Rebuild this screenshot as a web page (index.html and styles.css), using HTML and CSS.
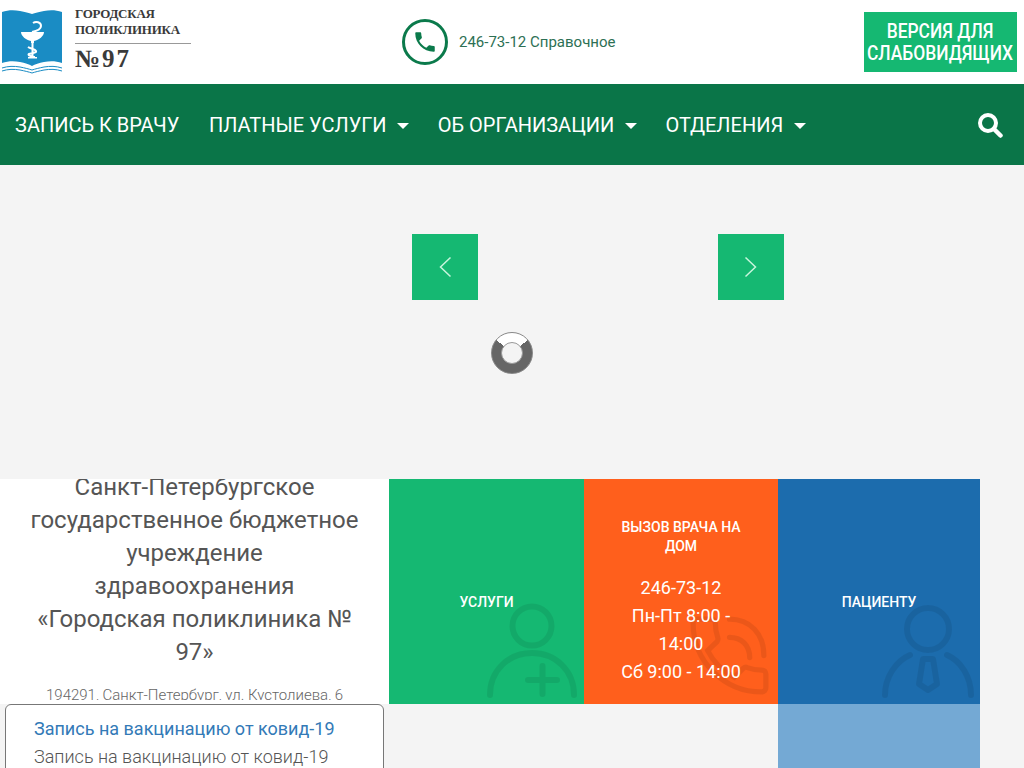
FILE: index.html
```html
<!DOCTYPE html>
<html lang="ru">
<head>
  <meta charset="UTF-8" />
  <meta name="viewport" content="width=device-width, initial-scale=1.0" />
  <title>Городская поликлиника № 97</title>
  <link rel="stylesheet" href="styles.css">
</head>
<body>
  <header class="top">
    <a class="logo" href="#">
      <svg class="logo-book" viewBox="0 3 62 72" width="62" height="72">
        <path fill="#1a8cc4" d="M1 9c6-2 12-2 18-1 5 1 9 2 12 3 3-1 7-2 12-3 6-1 12-1 18 1v51c-6-2-12-2-18-1-5 1-9 2-12 4-3-2-7-3-12-4-6-1-12-1-18 1z"/>
        <path fill="none" stroke="#1a8cc4" stroke-width="1" d="M1 65c6-2 12-2 18-1 5 1 9 2 12 3 3-1 7-2 12-3 6-1 12-1 18 1M1 68c6-2 12-2 18-1 5 1 9 2 12 3 3-1 7-2 12-3 6-1 12-1 18 1"/>
        <path fill="#fff" d="M20 29h23c0 4-5 8-10 9v2h-3v-2c-5-1-10-5-10-9z"/>
        <path fill="none" stroke="#fff" stroke-width="2" d="M31 29c5-1 9-3 9-6 0-4-5-5-8-3M31.500 40v14M27 44c3 2 7 2 8 4s-5 2-7 3 3 3 6 3"/>
        <path fill="#fff" d="M27 54h9v1.500h-9z"/>
      </svg>
      <div class="logo-text">
        <div class="logo-name">Городская<br>поликлиника</div>
        <div class="logo-num">№97</div>
      </div>
    </a>
    <div class="phone">
      <span class="phone-ring">
        <svg viewBox="0 0 24 24" width="26" height="26"><path fill="#0b7a4b" d="M6.600 10.800c1.400 2.800 3.800 5.100 6.600 6.600l2.200-2.200c.3-.3.7-.4 1-.2 1.100.4 2.300.6 3.600.6.600 0 1 .4 1 1V20c0 .6-.4 1-1 1C10.600 21 3 13.400 3 4c0-.6.4-1 1-1h3.500c.6 0 1 .4 1 1 0 1.300.2 2.500.6 3.600.1.300 0 .7-.2 1z"/></svg>
      </span>
      <span class="phone-text">246-73-12 Справочное</span>
    </div>
    <a class="blind-btn" href="#"><span>Версия для<br>слабовидящих</span></a>
  </header>

  <nav class="menu">
    <a href="#" class="first">Запись к врачу</a>
    <a href="#" class="has-sub">Платные услуги</a>
    <a href="#" class="has-sub">Об организации</a>
    <a href="#" class="has-sub">Отделения</a>
    <svg class="search" viewBox="0 0 26 26" width="26" height="26">
      <circle cx="11" cy="11" r="8" fill="none" stroke="#fff" stroke-width="4"/>
      <path d="M17 17l6.500 6.500" stroke="#fff" stroke-width="4.500" stroke-linecap="round"/>
    </svg>
  </nav>

  <section class="slider">
    <span class="arrow arrow-prev">
      <svg viewBox="0 0 14 22" width="14" height="22"><path d="M12.500 1.500L2.500 11l10 9.500" fill="none" stroke="#c8f5dd" stroke-width="1.500"/></svg>
    </span>
    <span class="arrow arrow-next">
      <svg viewBox="0 0 14 22" width="14" height="22"><path d="M1.500 1.500l10 9.500-10 9.500" fill="none" stroke="#c8f5dd" stroke-width="1.500"/></svg>
    </span>
    <span class="loader"></span>
  </section>

  <section class="blocks">
    <div class="about">
      <h1>Санкт-Петербургское государственное бюджетное учреждение здравоохранения «Городская поликлиника № 97»</h1>
      <p>194291, Санкт-Петербург, ул. Кустолиева, 6</p>
    </div>
    <a class="tile tile-green" href="#">
      <span class="tile-title">Услуги</span>
      <svg class="tile-ico ico-a" viewBox="0 0 95 97" width="95" height="97">
        <g fill="none" stroke="#000" stroke-opacity=".08" stroke-width="6" stroke-linecap="round">
          <circle cx="47" cy="23" r="19.500"/>
          <path d="M5 92c0-24 18-42 42-42s42 18 42 42"/>
          <path d="M43 77h29M57.500 63v28"/>
        </g>
      </svg>
    </a>
    <a class="tile tile-orange" href="#">
      <span class="tile-title">Вызов врача на дом</span>
      <span class="tile-info">246-73-12<br>Пн-Пт 8:00 - 14:00<br>Сб 9:00 - 14:00</span>
      <svg class="tile-ico ico-b" viewBox="0 0 24 24" width="97" height="97">
        <g fill="none" stroke="#000" stroke-opacity=".08" stroke-width="1.300" stroke-linecap="round">
          <path d="M6.600 10.800c1.400 2.800 3.800 5.100 6.600 6.600l2.200-2.200c.3-.3.7-.4 1-.2 1.100.4 2.300.6 3.600.6.600 0 1 .4 1 1V20c0 .6-.4 1-1 1C10.600 21 3 13.400 3 4c0-.6.4-1 1-1h3.500c.6 0 1 .4 1 1 0 1.300.2 2.500.6 3.600.1.300 0 .7-.2 1z"/>
          <path d="M12 7.500c3 0 5 2 5 5M12 3c5 0 8.500 3.500 8.500 9"/>
        </g>
      </svg>
    </a>
    <a class="tile tile-blue" href="#">
      <span class="tile-title">Пациенту</span>
      <svg class="tile-ico ico-c" viewBox="0 0 95 97" width="95" height="97">
        <g fill="none" stroke="#000" stroke-opacity=".08" stroke-width="6" stroke-linecap="round" stroke-linejoin="round">
          <circle cx="47" cy="26" r="21"/>
          <path d="M29 52C15 58 4 74 4 92M66 52c14 6 24 22 24 40"/>
          <path d="M42 56h10l4 25-9 6-9-6z"/>
        </g>
      </svg>
    </a>
    <div class="tile-light"></div>
  </section>

  <div class="notice">
    <a href="#">Запись на вакцинацию от ковид-19</a>
    <p>Запись на вакцинацию от ковид-19</p>
  </div>
</body>
</html>
```

FILE: styles.css
```css
html, body {
  height: 768px;
  overflow: hidden;
}

body {
  margin: 0;
  padding: 0;
  font-family: 'Roboto', sans-serif;
  background: #f4f4f4;
  color: #555;
}

a {
  text-decoration: none;
}

.top {
  display: flex;
  align-items: center;
  height: 84px;
  background: #fff;
}

.logo {
  display: flex;
  width: 190px;
  margin-left: 1px;
  color: #333;
}

.logo-book {
  flex: none;
}

.logo-text {
  margin-left: 12px;
  flex: 1;
  font-family: 'Liberation Serif', serif;
  font-weight: 700;
  color: #3a3a3a;
}

.logo-name {
  padding-bottom: 5px;
  font-size: 13px;
  line-height: 16px;
  letter-spacing: -0.25px;
  text-transform: uppercase;
  border-bottom: 1px solid #999;
}

.logo-num {
  font-size: 25px;
  line-height: 30px;
  letter-spacing: 2px;
}

.phone {
  display: flex;
  align-items: center;
  margin-left: 211px;
}

.phone-ring {
  display: flex;
  align-items: center;
  justify-content: center;
  width: 46px;
  height: 46px;
  box-sizing: border-box;
  border: 3px solid #0b7a4b;
  border-radius: 50%;
}

.phone-text {
  margin-left: 11px;
  font-size: 15px;
  color: #2d7054;
}

.blind-btn {
  display: flex;
  align-items: center;
  justify-content: center;
  width: 153px;
  height: 60px;
  margin-left: auto;
  margin-right: 7px;
  background: #15b872;
  color: #fff;
  font-size: 20px;
  font-weight: 500;
  line-height: 22px;
  text-align: center;
  text-transform: uppercase;
}

.blind-btn span {
  flex: none;
  white-space: nowrap;
  transform: scaleX(0.87);
}

.menu {
  display: flex;
  align-items: center;
  gap: 28.6px;
  height: 81px;
  padding-left: 15px;
  padding-right: 21px;
  background: #0a7548;
}

.menu a {
  color: #fff;
  font-size: 20px;
  text-transform: uppercase;
  white-space: nowrap;
}

.menu a.first {
  margin-right: 1px;
}

.menu a.has-sub {
  display: flex;
  align-items: center;
  gap: 10.5px;
}

.menu a.has-sub::after {
  content: "";
  border-left: 6px solid transparent;
  border-right: 6px solid transparent;
  border-top: 6px solid #fff;
  margin-top: 2px;
}

.search {
  margin-left: auto;
}

.slider {
  position: relative;
  height: 314px;
  background: #f4f4f4;
}

.arrow {
  position: absolute;
  top: 69px;
  display: flex;
  align-items: center;
  justify-content: center;
  width: 66px;
  height: 66px;
  background: #15b872;
}

.arrow-prev {
  left: 412px;
}

.arrow-next {
  left: 718px;
}

.loader {
  position: absolute;
  left: 491px;
  top: 167px;
  width: 42px;
  height: 42px;
  box-sizing: border-box;
  border: 1px solid #888;
  border-radius: 50%;
  background: conic-gradient(#fff 0 50deg, #666 50deg 310deg, #fff 310deg);
}

.loader::after {
  content: "";
  position: absolute;
  left: 9px;
  top: 9px;
  width: 22px;
  height: 22px;
  box-sizing: border-box;
  border: 1px solid #999;
  border-radius: 50%;
  background: #f4f4f4;
}

.blocks {
  display: grid;
  grid-template-columns: 389px 195px 194px 202px;
  grid-template-rows: 225px 64px;
}

.about {
  height: 225px;
  padding: 0 30px;
  box-sizing: border-box;
  background: #fff;
  text-align: center;
}

.about h1 {
  margin: -8px 0 0;
  font-size: 24px;
  font-weight: 400;
  line-height: 33px;
  color: #555;
}

.about p {
  height: 15px;
  margin: 16px -10px 0;
  overflow: hidden;
  font-size: 15px;
  font-weight: 300;
  line-height: 20px;
  white-space: nowrap;
  color: #666;
}

.tile {
  position: relative;
  display: flex;
  flex-direction: column;
  align-items: center;
  justify-content: center;
  padding: 21px 30px 0;
  color: #fff;
  text-align: center;
  overflow: hidden;
}

.tile-green {
  background: #15b872;
}

.tile-orange {
  background: #ff5f1c;
}

.tile-blue {
  background: #1c6cad;
}

.tile-title {
  position: relative;
  z-index: 1;
  font-size: 14px;
  font-weight: 500;
  line-height: 19px;
  text-transform: uppercase;
}

.tile-info {
  position: relative;
  z-index: 1;
  margin-top: 18px;
  font-size: 18px;
  line-height: 28px;
}

.tile-ico {
  position: absolute;
}

.ico-a {
  right: 4px;
  bottom: 4px;
}

.ico-b {
  right: 0;
  bottom: 0;
}

.ico-c {
  right: 4px;
  bottom: 4px;
}

.tile-light {
  grid-column: 4;
  grid-row: 2;
  background: #74a9d4;
}

.notice {
  position: fixed;
  left: 5px;
  top: 704px;
  width: 379px;
  height: 90px;
  box-sizing: border-box;
  padding: 10px 28px;
  background: #fff;
  border: 1px solid #777;
  border-radius: 6px;
  font-size: 18px;
  line-height: 28px;
}

.notice a {
  display: block;
  color: #337ab7;
}

.notice p {
  margin: 0;
  font-weight: 300;
  color: #555;
}
```
